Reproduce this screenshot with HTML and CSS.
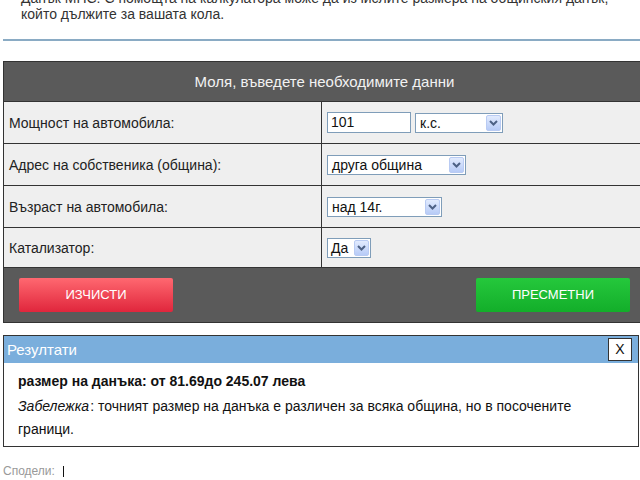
FILE: index.html
```html
<!DOCTYPE html>
<html lang="bg">
<head>
<meta charset="utf-8">
<title>Данък МПС</title>
<link rel="stylesheet" href="styles.css">
</head>
<body>
<div class="page">
  <p class="intro">Данък МПС: С помощта на калкулатора може да изчислите размера на общинския данък,<br>който дължите за вашата кола.</p>
  <hr class="rule">
  <div class="calc">
    <div class="calc-head">Моля, въведете необходимите данни</div>
    <div class="row">
      <div class="label">Мощност на автомобила:</div>
      <div class="field">
        <span class="input">101</span>
        <span class="select w-ks"><span class="val">к.с.</span><span class="arrow"><svg width="9" height="6" viewBox="0 0 9 6"><path d="M1 1 L4.5 4.5 L8 1" fill="none" stroke="#4d6185" stroke-width="2"/></svg></span></span>
      </div>
    </div>
    <div class="row">
      <div class="label">Адрес на собственика (община):</div>
      <div class="field">
        <span class="select w-obs"><span class="val">друга община</span><span class="arrow"><svg width="9" height="6" viewBox="0 0 9 6"><path d="M1 1 L4.5 4.5 L8 1" fill="none" stroke="#4d6185" stroke-width="2"/></svg></span></span>
      </div>
    </div>
    <div class="row">
      <div class="label">Възраст на автомобила:</div>
      <div class="field">
        <span class="select w-age"><span class="val">над 14г.</span><span class="arrow"><svg width="9" height="6" viewBox="0 0 9 6"><path d="M1 1 L4.5 4.5 L8 1" fill="none" stroke="#4d6185" stroke-width="2"/></svg></span></span>
      </div>
    </div>
    <div class="row row-last">
      <div class="label">Катализатор:</div>
      <div class="field">
        <span class="select w-cat"><span class="val">Да</span><span class="arrow"><svg width="9" height="6" viewBox="0 0 9 6"><path d="M1 1 L4.5 4.5 L8 1" fill="none" stroke="#4d6185" stroke-width="2"/></svg></span></span>
      </div>
    </div>
    <div class="actions">
      <span class="btn btn-red">ИЗЧИСТИ</span>
      <span class="btn btn-green">ПРЕСМЕТНИ</span>
    </div>
  </div>
  <div class="results">
    <div class="results-head"><span>Резултати</span><span class="close">X</span></div>
    <div class="results-body">
      <p class="amount">размер на данъка: от 81.69до 245.07 лева</p>
      <p class="note"><em class="note-label">Забележка</em>: точният размер на данъка е различен за всяка община, но в посочените граници.</p>
    </div>
  </div>
  <div class="share">Сподели: <span class="bar"></span></div>
</div>
</body>
</html>
```

FILE: styles.css
```css
html, body {
  margin: 0;
  padding: 0;
  background: #fff;
  overflow: hidden;
}
body {
  font-family: "Liberation Sans", Arial, sans-serif;
  color: #222;
  width: 640px;
}
.page {
  padding-left: 3px;
  width: 660px;
}
.intro {
  margin: -10px 0 0 18px;
  font-size: 14px;
  line-height: 16px;
  color: #333;
}
.rule {
  margin: 17px 0 0 0;
  border: 0;
  height: 2px;
  background: #8aabc4;
  width: 640px;
}
.calc {
  margin-top: 20px;
  width: 641px;
  border: 1px solid #333;
  background: #5a5a5a;
}
.calc-head {
  height: 39px;
  line-height: 39px;
  text-align: center;
  color: #f2f2f2;
  font-size: 15px;
  border-bottom: 1px solid #333;
}
.row {
  display: grid;
  grid-template-columns: 318px 1fr;
  height: 41px;
  border-bottom: 1px solid #333;
  background: #efefef;
}
.row-last { height: 39px; }
.label {
  display: flex;
  align-items: center;
  padding-left: 5px;
  font-size: 14px;
  color: #222;
  border-right: 1px solid #333;
}
.field {
  display: flex;
  align-items: center;
  gap: 4px;
  padding-left: 5px;
}
.input {
  box-sizing: border-box;
  width: 84px;
  height: 21px;
  border: 1px solid #7f9db9;
  background: #fff;
  font-size: 14px;
  line-height: 19px;
  padding-left: 3px;
  color: #111;
}
.select {
  box-sizing: border-box;
  display: inline-flex;
  align-items: center;
  justify-content: space-between;
  height: 20px;
  border: 1px solid #7f9db9;
  background: #fff;
  font-size: 14px;
  color: #111;
  padding: 0 1px 0 4px;
}
.val { line-height: 18px; }
.arrow {
  box-sizing: border-box;
  width: 15px;
  height: 16px;
  display: flex;
  align-items: center;
  justify-content: center;
  border: 1px solid #b9cbf3;
  border-radius: 2px;
  background: linear-gradient(#e2ebfe, #b7cbf7);
}
.w-ks { width: 88px; }
.w-obs { width: 139px; }
.w-age { width: 115px; }
.w-cat { width: 44px; padding-left: 3px; }
.actions {
  display: flex;
  justify-content: space-between;
  padding: 10px 15px 10px 15px;
}
.btn {
  width: 154px;
  height: 34px;
  line-height: 34px;
  text-align: center;
  color: #fff;
  font-size: 13px;
  border-radius: 2px;
}
.btn-red { background: linear-gradient(#ff6870, #e0263c); }
.btn-green { background: linear-gradient(#25c83c, #13ae2a); }
.results {
  margin-top: 12px;
  width: 634px;
  border: 1px solid #333;
}
.results-head {
  height: 27px;
  background: #7aaedc;
  color: #fff;
  font-size: 15px;
  display: flex;
  align-items: center;
  justify-content: space-between;
  padding: 0 6px 0 3px;
}
.close {
  box-sizing: border-box;
  width: 24px;
  height: 23px;
  background: #fff;
  border: 1px solid #333;
  color: #111;
  font-size: 14px;
  text-align: center;
  line-height: 21px;
}
.results-body {
  padding: 6px 14px 5px 14px;
  font-size: 14px;
  color: #111;
}
.amount {
  margin: 0;
  font-weight: bold;
  font-size: 14px;
  line-height: 24px;
}
.note {
  margin: 2px 0 0 0;
  line-height: 23px;
}
.note-label { padding-right: 1px; }
.share {
  margin-top: 17px;
  font-size: 12px;
  color: #999;
  display: flex;
  align-items: center;
  gap: 8px;
}
.bar {
  display: inline-block;
  width: 1px;
  height: 11px;
  background: #111;
}
```
